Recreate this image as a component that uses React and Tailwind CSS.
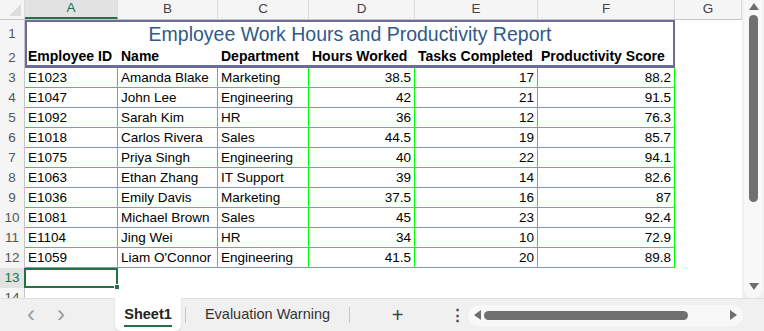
import React from 'react';

const cols = [
  { key: 'A', w: 'w-[93px]', cw: 'w-[92px]' },
  { key: 'B', w: 'w-[100px]', cw: 'w-[99px]' },
  { key: 'C', w: 'w-[91px]', cw: 'w-[90px]' },
  { key: 'D', w: 'w-[106px]', cw: 'w-[105px]' },
  { key: 'E', w: 'w-[123px]', cw: 'w-[122px]' },
  { key: 'F', w: 'w-[137px]', cw: 'w-[136px]' },
  { key: 'G', w: 'w-[67px]', cw: 'w-[66px]' },
];

const rows = [
  ['E1023', 'Amanda Blake', 'Marketing', '38.5', '17', '88.2'],
  ['E1047', 'John Lee', 'Engineering', '42', '21', '91.5'],
  ['E1092', 'Sarah Kim', 'HR', '36', '12', '76.3'],
  ['E1018', 'Carlos Rivera', 'Sales', '44.5', '19', '85.7'],
  ['E1075', 'Priya Singh', 'Engineering', '40', '22', '94.1'],
  ['E1063', 'Ethan Zhang', 'IT Support', '39', '14', '82.6'],
  ['E1036', 'Emily Davis', 'Marketing', '37.5', '16', '87'],
  ['E1081', 'Michael Brown', 'Sales', '45', '23', '92.4'],
  ['E1104', 'Jing Wei', 'HR', '34', '10', '72.9'],
  ['E1059', "Liam O'Connor", 'Engineering', '41.5', '20', '89.8'],
];

const headers = ['Employee ID', 'Name', 'Department', 'Hours Worked', 'Tasks Completed', 'Productivity Score'];

function RowHead({ n, h = 'h-[20px]', active }) {
  return (
    <div
      className={`w-[25px] shrink-0 ${h} flex items-center justify-center border-r border-[#c6c6c6] text-[13.5px] ${
        active ? 'bg-[#e2e2e2] text-[#217346]' : 'bg-[#f5f5f5] text-[#555]'
      }`}
    >
      {n}
    </div>
  );
}

export default function App() {
  return (
    <div className="w-[764px] h-[331px] overflow-hidden bg-[#f0f0f0] flex flex-col font-['Liberation_Sans',Arial,sans-serif]">
      <div className="flex h-[298px]">
        {/* grid */}
        <div className="w-[742px] h-[298px] bg-white overflow-hidden">
          {/* column headers */}
          <div className="flex h-[20px] bg-[#f5f5f5] border-b border-[#c6c6c6]">
            <div className="w-[25px] shrink-0 relative border-r border-[#dadada]">
              <div className="absolute right-[3px] bottom-[3px] w-0 h-0 border-l-[12px] border-l-transparent border-b-[12px] border-b-[#dcdcdc]" />
            </div>
            {cols.map((c) => (
              <div
                key={c.key}
                className={`${c.w} shrink-0 flex items-center justify-center text-[13.5px] border-r border-[#dadada] ${
                  c.key === 'A' ? 'bg-[#e2e2e2] text-[#217346] border-b-2 border-b-[#217346]' : 'text-[#444]'
                }`}
              >
                {c.key}
              </div>
            ))}
          </div>

          {/* row 1: title */}
          <div className="flex h-[28px]">
            <RowHead n="1" h="h-[28px]" />
            <div className="w-[650px] shrink-0 border-l-2 border-r-2 border-t-2 border-[#6c6a9a] flex items-center justify-center text-[19.5px] text-[#2f5a8a]">
              Employee Work Hours and Productivity Report
            </div>
          </div>

          {/* row 2: headers */}
          <div className="flex h-[20px]">
            <RowHead n="2" />
            <div className="flex w-[650px] shrink-0 border-l-2 border-r-2 border-b-[3px] border-[#6c6a9a]">
              {headers.map((t, i) => (
                <div
                  key={t}
                  className={`${cols[i].w} shrink-0 ${i === 0 ? '-ml-[2px] pl-[3px]' : 'pl-[3px]'} text-[14px] font-bold text-black leading-[17px] whitespace-nowrap overflow-hidden`}
                >
                  {t}
                </div>
              ))}
            </div>
          </div>

          {/* data rows: green lines show through the 1px gaps */}
          {rows.map((r, ri) => (
            <div key={ri} className="flex h-[20px]">
              <RowHead n={ri + 3} />
              <div className="flex gap-px pr-px pb-px bg-[#00ff00]">
                {r.map((v, ci) => (
                  <div
                    key={ci}
                    className={`${cols[ci].cw} shrink-0 h-[19px] bg-white px-[3px] text-[13.5px] text-black leading-[19px] whitespace-nowrap overflow-hidden ${
                      ci >= 3 ? 'text-right' : 'text-left'
                    }`}
                  >
                    {v}
                  </div>
                ))}
              </div>
            </div>
          ))}

          {/* row 13 */}
          <div className="flex h-[20px]">
            <RowHead n="13" active />
            <div className="w-[94px] shrink-0 -ml-[1px] h-[20px] border-2 border-[#217346] relative">
              <div className="absolute -right-[4px] -bottom-[4px] w-[6px] h-[6px] bg-[#217346] border border-white" />
            </div>
          </div>
          <div className="flex h-[20px]">
            <RowHead n="14" />
          </div>
        </div>

        {/* vertical scrollbar */}
        <div className="w-[22px] h-[298px] bg-[#f0f0f0] pl-[2px] pr-[1px]">
          <div className="h-[298px] bg-[#f8f8f8] rounded-b-[9px] flex flex-col items-center pt-[3px]">
            <div className="w-0 h-0 border-l-[5px] border-r-[5px] border-b-[7px] border-l-transparent border-r-transparent border-b-[#6e6e6e]" />
            <div className="w-[9px] h-[187px] mt-[5px] rounded-full bg-[#707070]" />
            <div className="flex-1" />
            <div className="w-0 h-0 border-l-[5px] border-r-[5px] border-t-[7px] border-l-transparent border-r-transparent border-t-[#6e6e6e] mb-[8px]" />
          </div>
        </div>
      </div>

      {/* tab bar */}
      <div className="h-[33px] border-t border-[#e0e0e0] bg-[#f0f0f0] flex items-stretch text-[14.5px]">
        <div className="w-[115px] flex items-center text-[#9a9a9a] text-[24px] leading-none">
          <span className="ml-[27px] -mt-[3px]">‹</span>
          <span className="ml-[22px] -mt-[3px]">›</span>
        </div>
        <div className="w-[66px] bg-white rounded-b-[6px] -mt-[1px] shadow-[0_1px_2px_rgba(0,0,0,0.12)] flex flex-col items-center justify-center">
          <span className="font-bold text-[#222] leading-[18px] mt-[2px]">Sheet1</span>
          <div className="w-[48px] h-[2px] bg-[#217346] mt-[2px]" />
        </div>
        <div className="w-[1px] h-[16px] bg-[#c8c8c8] self-center ml-[4px]" />
        <div className="w-[163px] flex items-center justify-center text-[#333]">Evaluation Warning</div>
        <div className="w-[1px] h-[16px] bg-[#c8c8c8] self-center" />
        <div className="w-[95px] flex items-center justify-center text-[#444] text-[20px] font-light">+</div>
        <div className="w-[25px] flex items-center justify-center text-[#444] text-[15px] font-bold">⋮</div>
        <div className="flex-1 flex items-center pr-[19px]">
          <div className="w-full h-[21px] rounded-full bg-[#f8f8f8] flex items-center px-[6px] -ml-[2px]">
            <div className="w-0 h-0 border-t-[5px] border-b-[5px] border-r-[7px] border-t-transparent border-b-transparent border-r-[#6e6e6e]" />
            <div className="w-[204px] h-[9px] rounded-full bg-[#707070] ml-[3px]" />
            <div className="flex-1" />
            <div className="w-0 h-0 border-t-[5px] border-b-[5px] border-l-[7px] border-t-transparent border-b-transparent border-l-[#6e6e6e]" />
          </div>
        </div>
      </div>
    </div>
  );
}
